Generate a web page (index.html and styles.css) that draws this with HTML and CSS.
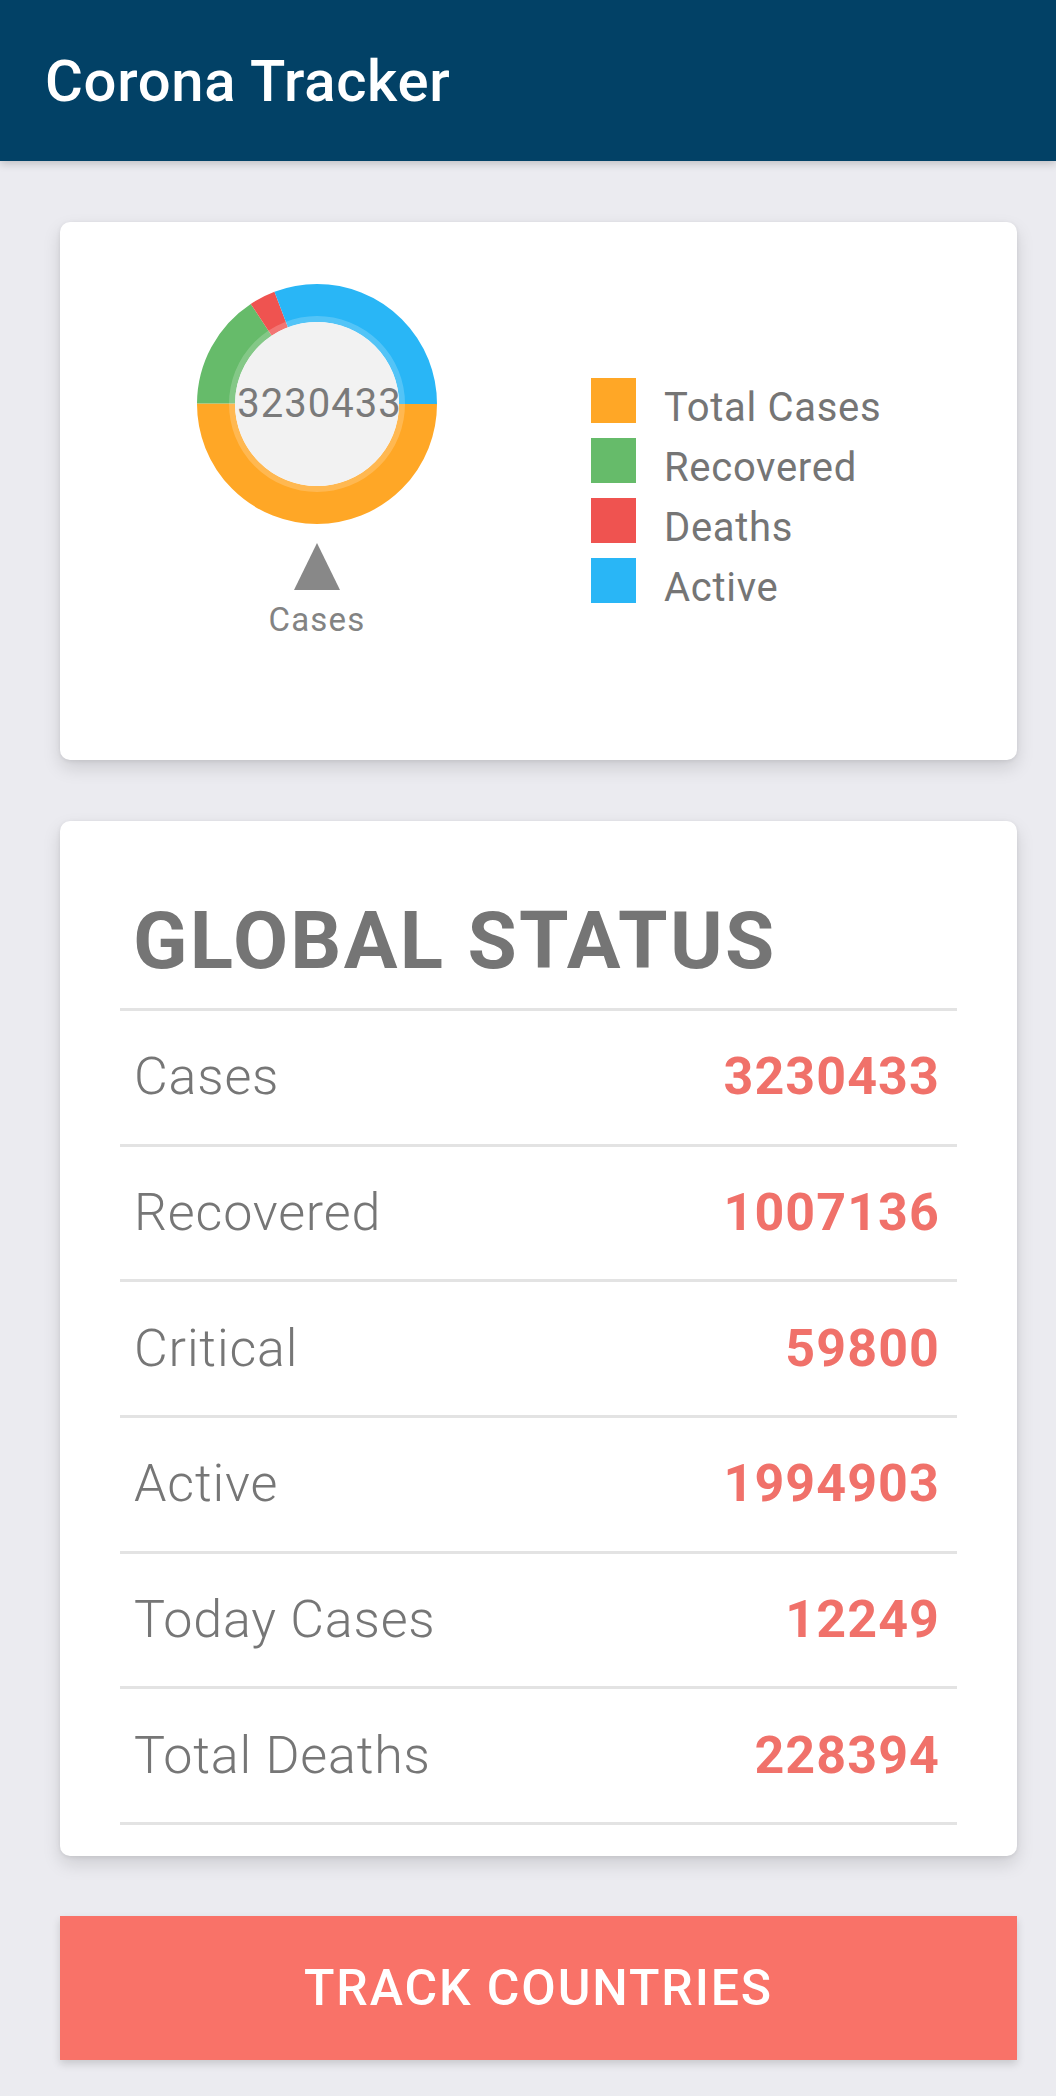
FILE: index.html
```html
<!DOCTYPE html>
<html>
<head>
<meta charset="utf-8">
<link rel="stylesheet" href="styles.css">
</head>
<body>
<header class="appbar"><h1 class="title">Corona Tracker</h1></header>
<main class="content">
  <section class="card chart-card">
    <div class="chart-col">
      <div class="donut">
        <svg class="donut-svg" width="240" height="240" viewBox="0 0 240 240">
          <circle cx="120" cy="120" r="101" fill="none" stroke="#ffa726" stroke-width="38" stroke-dasharray="317.3 634.6" stroke-dashoffset="0"/>
          <circle cx="120" cy="120" r="101" fill="none" stroke="#66bb6a" stroke-width="38" stroke-dasharray="98.9 634.6" stroke-dashoffset="-317.3"/>
          <circle cx="120" cy="120" r="101" fill="none" stroke="#ef5350" stroke-width="38" stroke-dasharray="22.4 634.6" stroke-dashoffset="-416.2"/>
          <circle cx="120" cy="120" r="101" fill="none" stroke="#29b6f6" stroke-width="38" stroke-dasharray="196 634.6" stroke-dashoffset="-438.6"/>
          <circle cx="120" cy="120" r="85" fill="none" stroke="#ffffff" stroke-opacity="0.2" stroke-width="6"/>
          <circle cx="120" cy="120" r="82" fill="#f2f2f2"/>
        </svg>
        <span class="donut-value">3230433</span>
      </div>
      <div class="triangle"></div>
      <div class="chart-label">Cases</div>
    </div>
    <ul class="legend">
      <li class="legend-item"><span class="swatch sw-orange"></span><span class="legend-text">Total Cases</span></li>
      <li class="legend-item"><span class="swatch sw-green"></span><span class="legend-text">Recovered</span></li>
      <li class="legend-item"><span class="swatch sw-red"></span><span class="legend-text">Deaths</span></li>
      <li class="legend-item"><span class="swatch sw-blue"></span><span class="legend-text">Active</span></li>
    </ul>
  </section>

  <section class="card status-card">
    <h2 class="status-title">GLOBAL STATUS</h2>
    <ul class="status-list">
      <li class="status-row"><span class="status-label">Cases</span><span class="status-value">3230433</span></li>
      <li class="status-row"><span class="status-label">Recovered</span><span class="status-value">1007136</span></li>
      <li class="status-row"><span class="status-label">Critical</span><span class="status-value">59800</span></li>
      <li class="status-row"><span class="status-label">Active</span><span class="status-value">1994903</span></li>
      <li class="status-row"><span class="status-label">Today Cases</span><span class="status-value">12249</span></li>
      <li class="status-row"><span class="status-label">Total Deaths</span><span class="status-value">228394</span></li>
    </ul>
  </section>

  <button class="track-btn">TRACK COUNTRIES</button>
</main>
</body>
</html>
```
FILE: styles.css
```css
* { box-sizing: border-box; }
html, body {
  margin: 0;
  padding: 0;
  background: #ebebf0;
  font-family: Roboto, "Noto Sans", "Liberation Sans", sans-serif;
}
body { width: 1056px; min-height: 2096px; }

.appbar {
  height: 161px;
  background: #024166;
  display: flex;
  align-items: center;
  padding-left: 45px;
  box-shadow: 0 3px 8px rgba(0, 0, 0, 0.18);
  position: relative;
  z-index: 2;
}
.title {
  margin: 0;
  color: #ffffff;
  font-size: 58px;
  font-weight: 500;
  line-height: 1;
  letter-spacing: 0.7px;
}

.content {
  padding: 61px 39px 0 60px;
  display: flex;
  flex-direction: column;
  gap: 61px;
}

.card {
  background: #ffffff;
  border-radius: 10px;
  box-shadow: 0 8px 18px rgba(0, 0, 0, 0.13), 0 1px 4px rgba(0, 0, 0, 0.08);
}

/* chart card */
.chart-card {
  height: 538px;
  display: flex;
  align-items: flex-start;
  padding: 62px 0 0 137px;
  gap: 154px;
}
.chart-col {
  width: 240px;
  display: flex;
  flex-direction: column;
  align-items: center;
}
.donut {
  width: 240px;
  height: 240px;
  display: grid;
  place-items: center;
}
.donut-svg, .donut-value { grid-area: 1 / 1; }
.donut-svg { display: block; }
.donut-value {
  font-size: 40px;
  color: #7a7a7a;
  line-height: 1;
  letter-spacing: 1px;
  padding-left: 5px;
}
.triangle {
  margin-top: 19px;
  width: 0;
  height: 0;
  border-left: 23.5px solid transparent;
  border-right: 23.5px solid transparent;
  border-bottom: 47px solid #888888;
}
.chart-label {
  margin-top: 11px;
  font-size: 33px;
  line-height: 38px;
  letter-spacing: 1.2px;
  color: #838383;
}

.legend {
  list-style: none;
  margin: 94px 0 0 0;
  padding: 0;
}
.legend-item {
  display: flex;
  align-items: flex-start;
  height: 60px;
  gap: 28px;
}
.swatch {
  width: 45px;
  height: 45px;
  display: block;
}
.sw-orange { background: #ffa726; }
.sw-green { background: #66bb6a; }
.sw-red { background: #ef5350; }
.sw-blue { background: #29b6f6; }
.legend-text {
  font-size: 40px;
  line-height: 60px;
  letter-spacing: 0.7px;
  color: #757575;
}

/* status card */
.status-card {
  padding: 0 60px 31px 60px;
}
.status-title {
  margin: 0;
  padding: 73px 0 0 13px;
  height: 187px;
  line-height: 94px;
  font-size: 80px;
  font-weight: 700;
  letter-spacing: 2.3px;
  color: #757575;
}
.status-list {
  list-style: none;
  margin: 0;
  padding: 0;
  border-top: 3px solid #e3e3e3;
}
.status-row {
  height: 135.67px;
  border-bottom: 3px solid #e3e3e3;
  display: flex;
  justify-content: space-between;
  align-items: center;
  padding: 0 17px 0 14px;
  line-height: 1;
}
.status-label {
  font-size: 52px;
  font-weight: 300;
  letter-spacing: 0.8px;
  color: #767676;
}
.status-value {
  font-size: 52px;
  font-weight: 700;
  letter-spacing: 1.1px;
  color: #f0716a;
}

.track-btn {
  display: block;
  width: 100%;
  height: 144px;
  border: none;
  border-radius: 0;
  background: #f97268;
  color: #ffffff;
  font-family: Roboto, "Noto Sans", "Liberation Sans", sans-serif;
  font-size: 50px;
  font-weight: 500;
  letter-spacing: 1.9px;
  margin-top: -1px;
  box-shadow: 0 4px 8px rgba(0, 0, 0, 0.15);
}
```
